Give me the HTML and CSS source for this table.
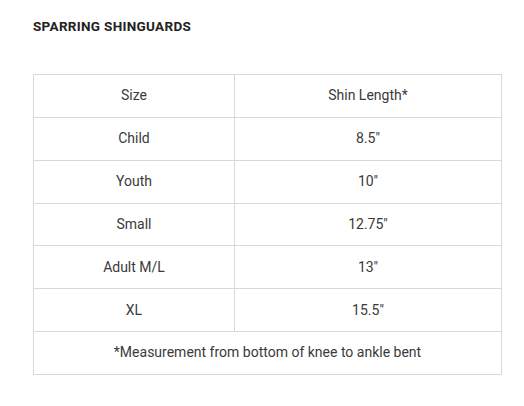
FILE: index.html
```html
<!DOCTYPE html>
<html>
<head>
<meta charset="utf-8">
<link rel="stylesheet" href="styles.css">
</head>
<body>
<div class="page">
  <h2 class="title">SPARRING SHINGUARDS</h2>
  <table class="chart">
    <tr><td class="c1">Size</td><td>Shin Length*</td></tr>
    <tr><td class="c1">Child</td><td>8.5"</td></tr>
    <tr><td class="c1">Youth</td><td>10"</td></tr>
    <tr><td class="c1">Small</td><td>12.75"</td></tr>
    <tr><td class="c1">Adult M/L</td><td>13"</td></tr>
    <tr><td class="c1">XL</td><td>15.5"</td></tr>
    <tr><td colspan="2">*Measurement from bottom of knee to ankle bent</td></tr>
  </table>
</div>
</body>
</html>
```
FILE: styles.css
```css
html, body { margin: 0; padding: 0; background: #fff; }
.page {
  padding: 18px 22px 0 33px;
  font-family: "Roboto", "Liberation Sans", sans-serif;
}
.title {
  margin: 0 0 40px 0;
  font-size: 13.5px;
  font-weight: 700;
  letter-spacing: 0.3px;
  color: #222;
  line-height: 16px;
}
.chart {
  border-collapse: collapse;
  width: 469px;
  color: #3a3a3a;
  font-size: 14px;
}
.chart td {
  border: 1px solid #d8d8d8;
  height: 40.85px;
  padding: 0 0 1px 0;
  text-align: center;
  vertical-align: middle;
}
.chart .c1 { width: 200px; }
```
